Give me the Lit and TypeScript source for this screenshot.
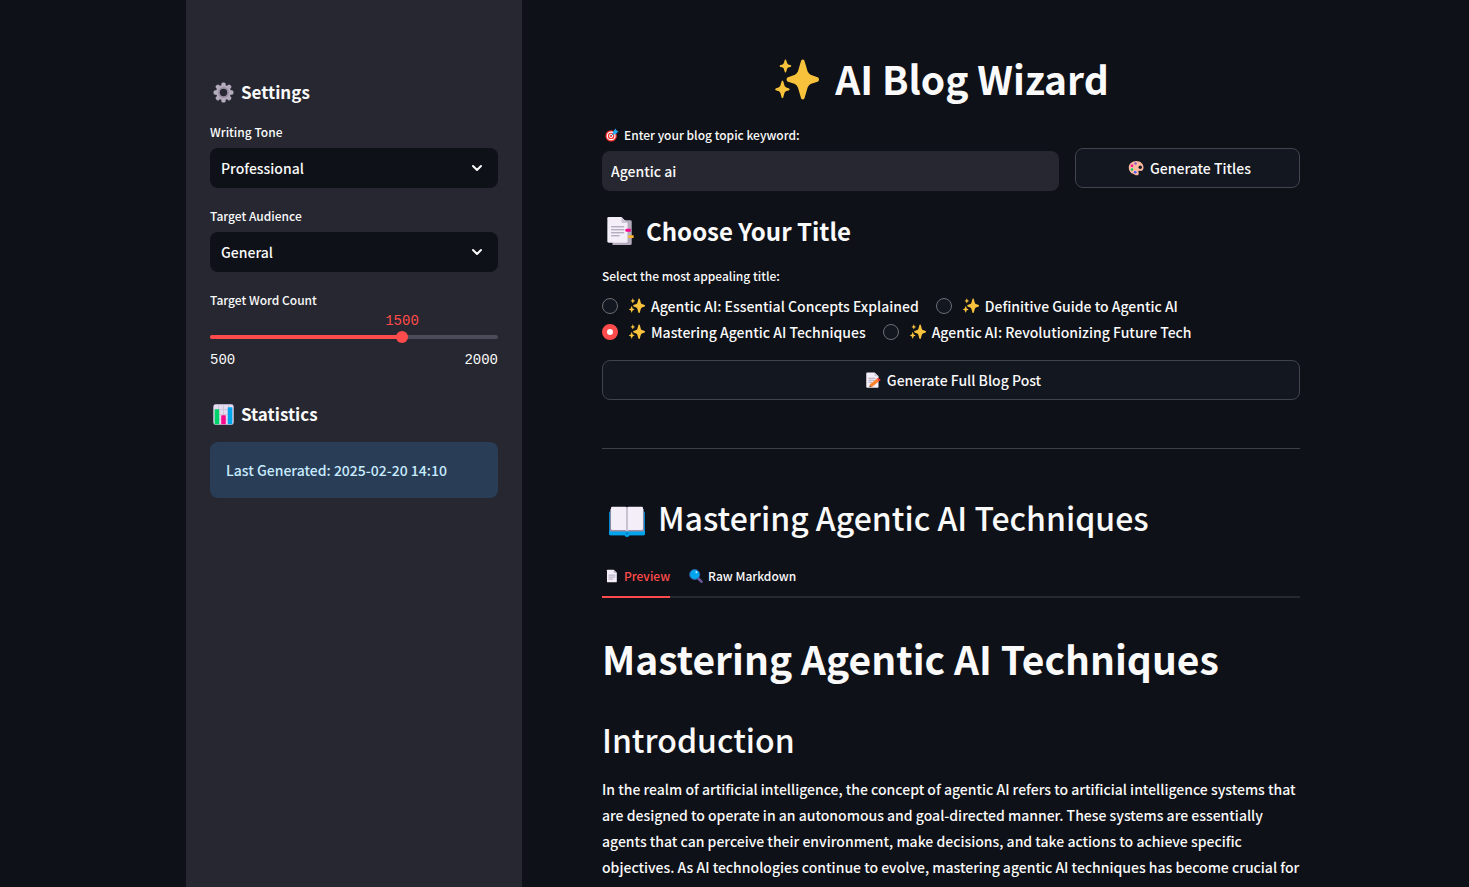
import { LitElement, html, css, svg } from "lit";
import { customElement, state } from "lit/decorators.js";
import { classMap } from "lit/directives/class-map.js";

const star = (cx: number, cy: number, rx: number, ry: number) => {
  const a = 0.1;
  const b = 0.36;
  const p = (x: number, y: number) => `${cx + x * rx} ${cy + y * ry}`;
  return (
    `M${p(-a, -0.95)}Q${p(0, -1.05)} ${p(a, -0.95)}` +
    `L${p(b - 0.06, -b - 0.04)}Q${p(b, -b + 0.06)} ${p(b + 0.12, -b + 0.13)}L${p(0.95, -a)}Q${p(1.05, 0)} ${p(0.95, a)}` +
    `L${p(b + 0.12, b - 0.13)}Q${p(b, b - 0.06)} ${p(b - 0.06, b + 0.04)}L${p(a, 0.95)}Q${p(0, 1.05)} ${p(-a, 0.95)}` +
    `L${p(-b + 0.06, b + 0.04)}Q${p(-b, b - 0.06)} ${p(-b - 0.12, b - 0.13)}L${p(-0.95, a)}Q${p(-1.05, 0)} ${p(-0.95, -a)}` +
    `L${p(-b - 0.12, -b + 0.13)}Q${p(-b, -b + 0.06)} ${p(-b + 0.06, -b - 0.04)}Z`
  );
};

const art: Record<string, unknown> = {
  sparkles: svg`<g fill="#f9c23c">
    <path d=${star(20.2, 15.6, 11.8, 14.6)} />
    <path d=${star(7.6, 5.8, 4.2, 4.8)} />
    <path d=${star(5.4, 22.8, 5.2, 6.4)} /></g>`,
  gear: svg`<g fill="#b4acbc">${[0, 45, 90, 135].map(
    (r) => svg`<rect x="12.7" y="0.8" width="6.6" height="30.4" rx="2.4" transform="rotate(${r} 16 16)" />`
  )}<circle cx="16" cy="16" r="11.4" /></g>
    <circle cx="16" cy="16" r="7" fill="#262730" stroke="#998ea4" stroke-width="2.8" />`,
  chart: svg`<rect x="0.5" y="0.5" width="31" height="31" rx="3.5" fill="#e6dcf2" />
    <path d="M8.5 1v30M16 1v30M23.500 1v30M1 8.500h30M1 16h30M1 23.500h30" stroke="#cdc4d6" stroke-width="1.400" />
    <path d="M2.500 31V9a1 1 0 0 1 1-1h5a1 1 0 0 1 1 1v22z" fill="#00d26a" />
    <path d="M12.500 31V18a1 1 0 0 1 1-1h5a1 1 0 0 1 1 1v13z" fill="#f70a8d" />
    <path d="M22.500 31V6a1 1 0 0 1 1-1h5a1 1 0 0 1 1 1v25z" fill="#00a6ed" />`,
  target: svg`<circle cx="14" cy="18" r="13" fill="#f8312f" />
    <circle cx="14" cy="18" r="10.200" fill="#fff" /><circle cx="14" cy="18" r="7.400" fill="#f8312f" />
    <circle cx="14" cy="18" r="4.600" fill="#fff" /><circle cx="14" cy="18" r="2.400" fill="#f8312f" />
    <path d="M14 18 26 6" stroke="#1c6fb5" stroke-width="2" />
    <path d="M18 8.500 24.500 1l1.700 4.600L31 7.200l-7 7-6.500.5z" fill="#26a9f0" />`,
  palette: svg`<path d="M16.500 2C8 2 1.500 8 1.500 15.500c0 6.500 4 11 9.500 12.500 2 .6 2.500 2 5 2.500 3 .7 5.500-.5 5.500-3.500 0-2-1.500-3-.5-4.500 1.200-1.800 4 .3 6.500-1 2.300-1.200 3.500-3.500 3.500-6C31 7.500 25 2 16.500 2z" fill="#ffb8a0" />
    <circle cx="24.500" cy="14.500" r="3.400" fill="#14181f" />
    <circle cx="15" cy="6.800" r="2.500" fill="#8c55d6" /><circle cx="8" cy="11.500" r="2.600" fill="#f70a8d" />
    <circle cx="8" cy="19" r="2.600" fill="#00d26a" /><circle cx="14.500" cy="24.500" r="2.700" fill="#3f5fff" />`,
  tabsDoc: svg`<path d="M7 4.500h20a1.500 1.500 0 0 1 1.500 1.500v23.500a1.500 1.500 0 0 1-1.500 1.500H8z" fill="#b4acbc" />
    <path d="M4 1h13.500L24 7.500V27a1.500 1.500 0 0 1-1.500 1.500H4A1.500 1.500 0 0 1 2.500 27V2.500A1.500 1.500 0 0 1 4 1z" fill="#f3eef8" />
    <path d="M17.500 1 24 7.500h-5A1.500 1.500 0 0 1 17.500 6z" fill="#cdc4d6" />
    <path d="M6.500 11.500h14M6.500 14.700h14M6.500 17.900h14M6.500 21.100h9" stroke="#998ea4" stroke-width="1" />
    <path d="M22.500 13.500h5v3.200h-5l-1.200-1.600z" fill="#f70a8d" /><path d="M25.500 20.500h5v3h-5L24.200 22z" fill="#fcb32b" />`,
  memo: svg`<path d="M4.500 1H19l8 7.500V30a1.500 1.500 0 0 1-1.500 1.500h-21A2 2 0 0 1 2.500 29.500V3a2 2 0 0 1 2-2z" fill="#f3eef8" />
    <path d="M19 1l8 7.500h-6A2 2 0 0 1 19 6.500z" fill="#cdc4d6" />
    <path d="M7 12.500h14M7 16.500h12M7 20.500h7" stroke="#998ea4" stroke-width="1.400" />
    <path d="M10 24.500 23.500 13.500l4.500 5L14.500 29.500l-5.500.5z" fill="#ff822d" />
    <path d="m23.500 13.500 3-2.200 5 4.500-3.500 2.700z" fill="#f8312f" /><path d="m9 30 .6-3.200 3 2.900z" fill="#402a32" />`,
  book: svg`<g transform="translate(0 3)"><path d="M0 7.500A1.500 1.500 0 0 1 1.500 6h29A1.500 1.500 0 0 1 32 7.500V26a1.500 1.500 0 0 1-1.500 1.500H18c-.5 1.800-3.500 1.800-4 0H1.500A1.500 1.500 0 0 1 0 26z" fill="#0084ce" />
    <path d="M0 23.500h32V26a1.500 1.500 0 0 1-1.500 1.500H18c-.5 1.800-3.500 1.800-4 0H1.500A1.500 1.500 0 0 1 0 26z" fill="#00a6ed" />
    <path d="M1 4h30v20H1z" fill="#998ea4" />
    <path d="M14.500 26.500 16 24.500l1.500 2z" fill="#0074ba" />
    <path d="M2.800 2h12L16 2.800l1.200-.8h12a1 1 0 0 1 1 1v18.700a1 1 0 0 1-1 1H17.200L16 23.700l-1.200-1h-12a1 1 0 0 1-1-1V3a1 1 0 0 1 1-1z" fill="#f3eef8" />
    <path d="M16 3v20" stroke="#b4acbc" stroke-width="1.200" /></g>`,
  page: svg`<path d="M6 1.500h14l7 7V29a1.500 1.500 0 0 1-1.500 1.500H6A1.500 1.500 0 0 1 4.500 29V3A1.500 1.500 0 0 1 6 1.500z" fill="#f3eef8" />
    <path d="m20 1.500 7 7h-5.500A1.500 1.500 0 0 1 20 7z" fill="#b4acbc" />
    <path d="M8 14h15.500M8 18.500h15.500M8 23h10" stroke="#998ea4" stroke-width="1.700" />`,
  lens: svg`<path d="m19.500 20 9 9" stroke="#6a5a9c" stroke-width="6" stroke-linecap="round" />
    <circle cx="13" cy="12.500" r="11.500" fill="#00a6ed" stroke="#3c5fa8" stroke-width="2" />
    <circle cx="17" cy="7.500" r="2.200" fill="#d5f1ff" />`,
};

const icon = (name: string, size: string) =>
  html`<svg class="icon ${size}" viewBox="0 0 32 32" aria-hidden="true">${art[name]}</svg>`;

@customElement("app-root")
export class AppRoot extends LitElement {
  static styles = css`
    :host {
      display: block;
      height: 100vh;
      overflow: hidden;
      background: #0e1117;
      color: #fafafa;
      font-family: "Noto Sans CJK JP", "Noto Sans", sans-serif;
      font-size: 14px;
      font-weight: 500;
      line-height: 24px;
    }
    *, *::before { box-sizing: border-box; }
    h1, h2, h3, p, fieldset, hr { margin: 0; padding: 0; border: 0; }
    button, input, select { font: inherit; color: inherit; margin: 0; }
    .app {
      display: grid;
      grid-template-columns: 336px minmax(0, 1fr);
      height: 100%;
      margin: 0 89px 0 186px;
    }
    .sidebar { background: #262730; padding: 80px 24px 24px; overflow-y: auto; scrollbar-width: none; }
    .main { padding: 52px 80px 80px; overflow-y: auto; scrollbar-width: none; }
    .icon { flex: none; display: block; }
    .s14 { width: 14px; height: 14px; }
    .s16 { width: 16px; height: 16px; }
    .s20 { width: 21px; height: 21px; }
    .s28 { width: 30px; height: 30px; }
    .s36 { width: 36px; height: 36px; margin-top: 4px; }
    .s44 { width: 44px; height: 44px; margin-top: 4px; }

    .side-title { display: flex; align-items: center; gap: 7px; padding-left: 3px; font-size: 17px; font-weight: 700; line-height: 24px; }
    .field { display: flex; flex-direction: column; gap: 6px; margin-top: 18px; }
    .label { display: flex; align-items: center; gap: 5px; font-size: 12px; line-height: 20px; }
    .select { display: grid; align-items: center; }
    .select > * { grid-area: 1 / 1; }
    .select select {
      appearance: none;
      width: 100%;
      height: 40px;
      padding: 0 40px 0 11px;
      border: 0;
      border-radius: 8px;
      background: #0e1117;
    }
    .chevron { width: 12px; height: 8px; justify-self: end; margin-right: 15px; pointer-events: none; }
    .slider { display: flex; flex-direction: column; margin-top: 18px; }
    .mono { font-family: "Liberation Mono", monospace; font-weight: 400; font-size: 14px; line-height: 20px; }
    .value { width: max-content; padding-top: 2px; line-height: 18px; color: #ff4b4b; transform: translateX(-50%); }
    .track { display: grid; align-items: center; }
    .track > * { grid-area: 1 / 1; }
    .rail { height: 4px; border-radius: 4px; background: #4b4c59; overflow: hidden; }
    .fill { height: 100%; background: #ff4b4b; }
    .track input { appearance: none; background: none; height: 14px; width: calc(100% + 12px); margin: 0 -6px; }
    .track input::-webkit-slider-thumb { appearance: none; width: 12px; height: 12px; border-radius: 50%; background: #ff4b4b; }
    .ticks { display: flex; justify-content: space-between; margin-top: 6px; }
    .stats { margin-top: 32px; }
    .info { margin-top: 16px; padding: 16px; border-radius: 8px; background: #2a3d56; color: #c7ebff; }

    .hero { display: flex; justify-content: center; align-items: center; gap: 16px; padding-right: 18px; font-size: 39px; font-weight: 700; line-height: 52px; }
    .topic { display: grid; grid-template-columns: minmax(0, 2.03fr) minmax(0, 1fr); gap: 16px; margin-top: 21px; align-items: start; }
    .topic .field { margin-top: 0; }
    .label.lead { padding-left: 3px; }
    .text { width: 100%; height: 40px; padding: 0 9px; border: 0; border-radius: 8px; background: #262730; }
    .btn {
      display: flex;
      align-items: center;
      justify-content: center;
      gap: 6px;
      width: 100%;
      height: 40px;
      padding: 0 0 0 4px;
      border: 1px solid #41444c;
      border-radius: 8px;
      background: #13171f;
    }
    .topic .btn { margin-top: 23px; }
    .choose { display: flex; align-items: center; gap: 11px; padding-left: 3px; margin-top: 23px; font-size: 24px; font-weight: 700; line-height: 34px; }
    .choices { display: flex; flex-wrap: wrap; gap: 2px 17px; margin: 18px 0 16px; }
    .choices .label { width: 100%; margin-bottom: 6px; }
    .choice { display: flex; align-items: center; gap: 6px; }
    .choice input {
      appearance: none;
      width: 16px;
      height: 16px;
      margin-right: 5px;
      border: 1px solid #6c6e74;
      border-radius: 50%;
      background: #13171f;
    }
    .choice input:checked { border: 5px solid #ff4b4b; background: #fafafa; }
    .rule { height: 1px; margin: 48px 0 47px; background: #3d4046; }
    .post-title { display: flex; align-items: center; gap: 13px; padding-left: 7px; }
    .h2 { font-size: 32px; font-weight: 500; line-height: 42px; }
    .tabs { display: flex; gap: 16px; margin-top: 18px; height: 42px; box-shadow: inset 0 -2px #262930; }
    .tab { display: flex; align-items: center; gap: 5px; padding: 0 0 0 3px; border: 0; border-bottom: 2px solid transparent; background: none; font-size: 12px; line-height: 20px; }
    .tab.active { color: #ff4b4b; border-color: #ff4b4b; }
    .article-title { margin-top: 34px; font-size: 39px; font-weight: 700; line-height: 52px; }
    .article .h2 { margin-top: 34px; }
    .body { margin-top: 16px; line-height: 26px; }
  `;

  @state() private words = 1500;
  @state() private title = 2;
  @state() private tab = 0;

  private titles = [
    "Agentic AI: Essential Concepts Explained",
    "Definitive Guide to Agentic AI",
    "Mastering Agentic AI Techniques",
    "Agentic AI: Revolutionizing Future Tech",
  ];

  private dropdown(id: string, label: string, options: string[]) {
    return html`<div class="field">
      <label class="label" for=${id}>${label}</label>
      <div class="select">
        <select id=${id}>${options.map((o) => html`<option>${o}</option>`)}</select>
        <svg class="chevron" viewBox="0 0 12 8" fill="none" stroke="#fafafa" stroke-width="2" stroke-linecap="round" stroke-linejoin="round" aria-hidden="true"><path d="M2 2l4 4 4-4" /></svg>
      </div>
    </div>`;
  }

  render() {
    const percent = ((this.words - 500) / 1500) * 100;
    const tabs = [["page", "Preview"], ["lens", "Raw Markdown"]];
    return html`<div class="app">
      <aside class="sidebar">
        <h3 class="side-title">${icon("gear", "s20")}Settings</h3>
        ${this.dropdown("tone", "Writing Tone", ["Professional", "Casual", "Technical"])}
        ${this.dropdown("audience", "Target Audience", ["General", "Experts", "Beginners"])}
        <div class="slider">
          <label class="label" for="words">Target Word Count</label>
          <output class="mono value" for="words" style="margin-left:${percent}%">${this.words}</output>
          <div class="track">
            <div class="rail"><div class="fill" style="width:${percent}%"></div></div>
            <input id="words" type="range" min="500" max="2000" step="100" .value=${String(this.words)}
              @input=${(e: Event) => (this.words = Number((e.target as HTMLInputElement).value))} />
          </div>
          <div class="mono ticks"><span>500</span><span>2000</span></div>
        </div>
        <h3 class="side-title stats">${icon("chart", "s20")}Statistics</h3>
        <p class="info">Last Generated: 2025-02-20 14:10</p>
      </aside>
      <main class="main">
        <h1 class="hero">${icon("sparkles", "s44")}AI Blog Wizard</h1>
        <div class="topic">
          <div class="field">
            <label class="label lead" for="topic">${icon("target", "s14")}Enter your blog topic keyword:</label>
            <input class="text" id="topic" type="text" value="Agentic ai" />
          </div>
          <button class="btn" type="button">${icon("palette", "s16")}Generate Titles</button>
        </div>
        <h3 class="choose">${icon("tabsDoc", "s28")}Choose Your Title</h3>
        <fieldset class="choices" aria-labelledby="pick">
          <div class="label" id="pick">Select the most appealing title:</div>
          ${this.titles.map(
            (t, i) => html`<label class="choice"><input type="radio" name="title" .checked=${this.title === i}
              @change=${() => (this.title = i)} />${icon("sparkles", "s16")}${t}</label>`
          )}
        </fieldset>
        <button class="btn" type="button">${icon("memo", "s16")}Generate Full Blog Post</button>
        <hr class="rule" />
        <h2 class="h2 post-title">${icon("book", "s36")}Mastering Agentic AI Techniques</h2>
        <div class="tabs" role="tablist">
          ${tabs.map(
            ([name, label], i) => html`<button type="button" role="tab" aria-selected=${this.tab === i}
              class=${classMap({ tab: true, active: this.tab === i })} @click=${() => (this.tab = i)}>${icon(name, "s14")}${label}</button>`
          )}
        </div>
        <article class="article">
          <h1 class="article-title">Mastering Agentic AI Techniques</h1>
          <h2 class="h2">Introduction</h2>
          <p class="body">In the realm of artificial intelligence, the concept of agentic AI refers to artificial intelligence systems that are designed to operate in an autonomous and goal-directed manner. These systems are essentially agents that can perceive their environment, make decisions, and take actions to achieve specific objectives. As AI technologies continue to evolve, mastering agentic AI techniques has become crucial for developers, researchers, and businesses looking to harness the full potential of artificial intelligence.</p>
        </article>
      </main>
    </div>`;
  }
}
